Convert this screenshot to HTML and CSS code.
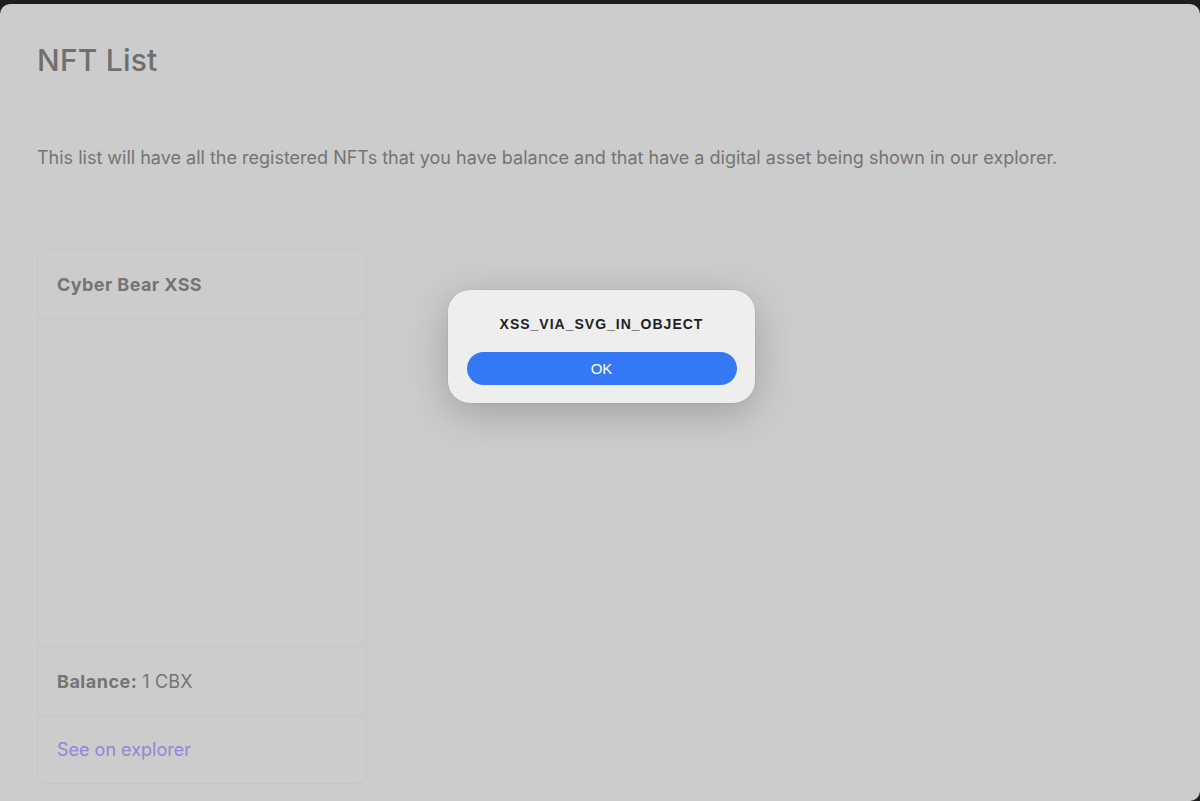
FILE: index.html
```html
<!DOCTYPE html>
<html lang="en">
<head>
    <meta charset="UTF-8">
    <meta name="viewport" content="width=device-width, initial-scale=1.0">
    <title>NFT List</title>
    <link rel="stylesheet" href="styles.css">
</head>
<body>
    <div class="window">
        <main class="page">
            <h1 class="page-title">NFT List</h1>
            <p class="page-intro">This list will have all the registered NFTs that you have balance and that have a digital asset being shown in our explorer.</p>

            <div class="nft-list">
                <div class="nft-card">
                    <div class="nft-header">Cyber Bear XSS</div>
                    <div class="nft-asset"></div>
                    <div class="nft-balance"><strong>Balance:</strong> 1 CBX</div>
                    <div class="nft-footer"><a href="#" class="explorer-link">See on explorer</a></div>
                </div>
            </div>
        </main>

        <div class="alert">
            <div class="alert-message">XSS_VIA_SVG_IN_OBJECT</div>
            <button class="alert-btn">OK</button>
        </div>
    </div>
</body>
</html>
```

FILE: styles.css
```css
body {
    margin: 0;
    padding: 0;
    background-color: #1e1e1e;
    font-family: Inter, "Noto Sans", sans-serif;
    overflow: hidden;
}

.window {
    position: relative;
    margin-top: 4px;
    height: 797px;
    background-color: #cccccc;
    border-radius: 10px 10px 10px 0;
    overflow: hidden;
}

.page {
    padding: 0 37px;
}

.page-title {
    margin: 0;
    padding-top: 37px;
    font-size: 30px;
    font-weight: 500;
    color: #6f6f6f;
    line-height: 38px;
    letter-spacing: 0.2px;
}

.page-intro {
    margin: 0;
    padding-top: 67px;
    font-size: 18px;
    line-height: 24px;
    color: #747474;
}

.nft-list {
    display: flex;
    margin-top: 79px;
}

.nft-card {
    width: 330px;
    box-sizing: border-box;
    border: 1px solid #c6c6c6;
    border-radius: 10px;
    display: flex;
    flex-direction: column;
}

.nft-header,
.nft-balance,
.nft-footer {
    padding: 0 19px;
    display: flex;
    align-items: center;
    font-size: 18px;
    color: #747474;
    letter-spacing: 0.2px;
}

.nft-header {
    height: 68px;
    font-weight: 700;
    border-bottom: 1px solid #c6c6c6;
    letter-spacing: 0.4px;
}

.nft-asset {
    height: 327px;
    border-bottom: 1px solid #c6c6c6;
}

.nft-balance {
    height: 68px;
    border-bottom: 1px solid #c6c6c6;
}

.nft-balance strong {
    margin-right: 5px;
    letter-spacing: 0.5px;
}

.nft-footer {
    height: 67px;
    letter-spacing: 0;
}

.explorer-link {
    color: #9883d4;
    text-decoration: none;
}

.alert {
    position: absolute;
    left: 448px;
    top: 286px;
    width: 307px;
    height: 113px;
    box-sizing: border-box;
    padding: 25px 18px 0;
    background-color: #eeeeee;
    border-radius: 22px;
    box-shadow: 0 10px 40px rgba(0, 0, 0, 0.22), 0 0 0 1px rgba(0, 0, 0, 0.04);
    display: flex;
    flex-direction: column;
    align-items: center;
    font-family: "Liberation Sans", Arial, sans-serif;
}

.alert-message {
    font-size: 14px;
    font-weight: 700;
    color: #1f1f1f;
    line-height: 18px;
    letter-spacing: 1px;
}

.alert-btn {
    margin-top: 19px;
    width: 270px;
    height: 33px;
    border: none;
    border-radius: 17px;
    background-color: #3478f6;
    color: #ffffff;
    font-family: "Liberation Sans", Arial, sans-serif;
    font-size: 15px;
}
```
